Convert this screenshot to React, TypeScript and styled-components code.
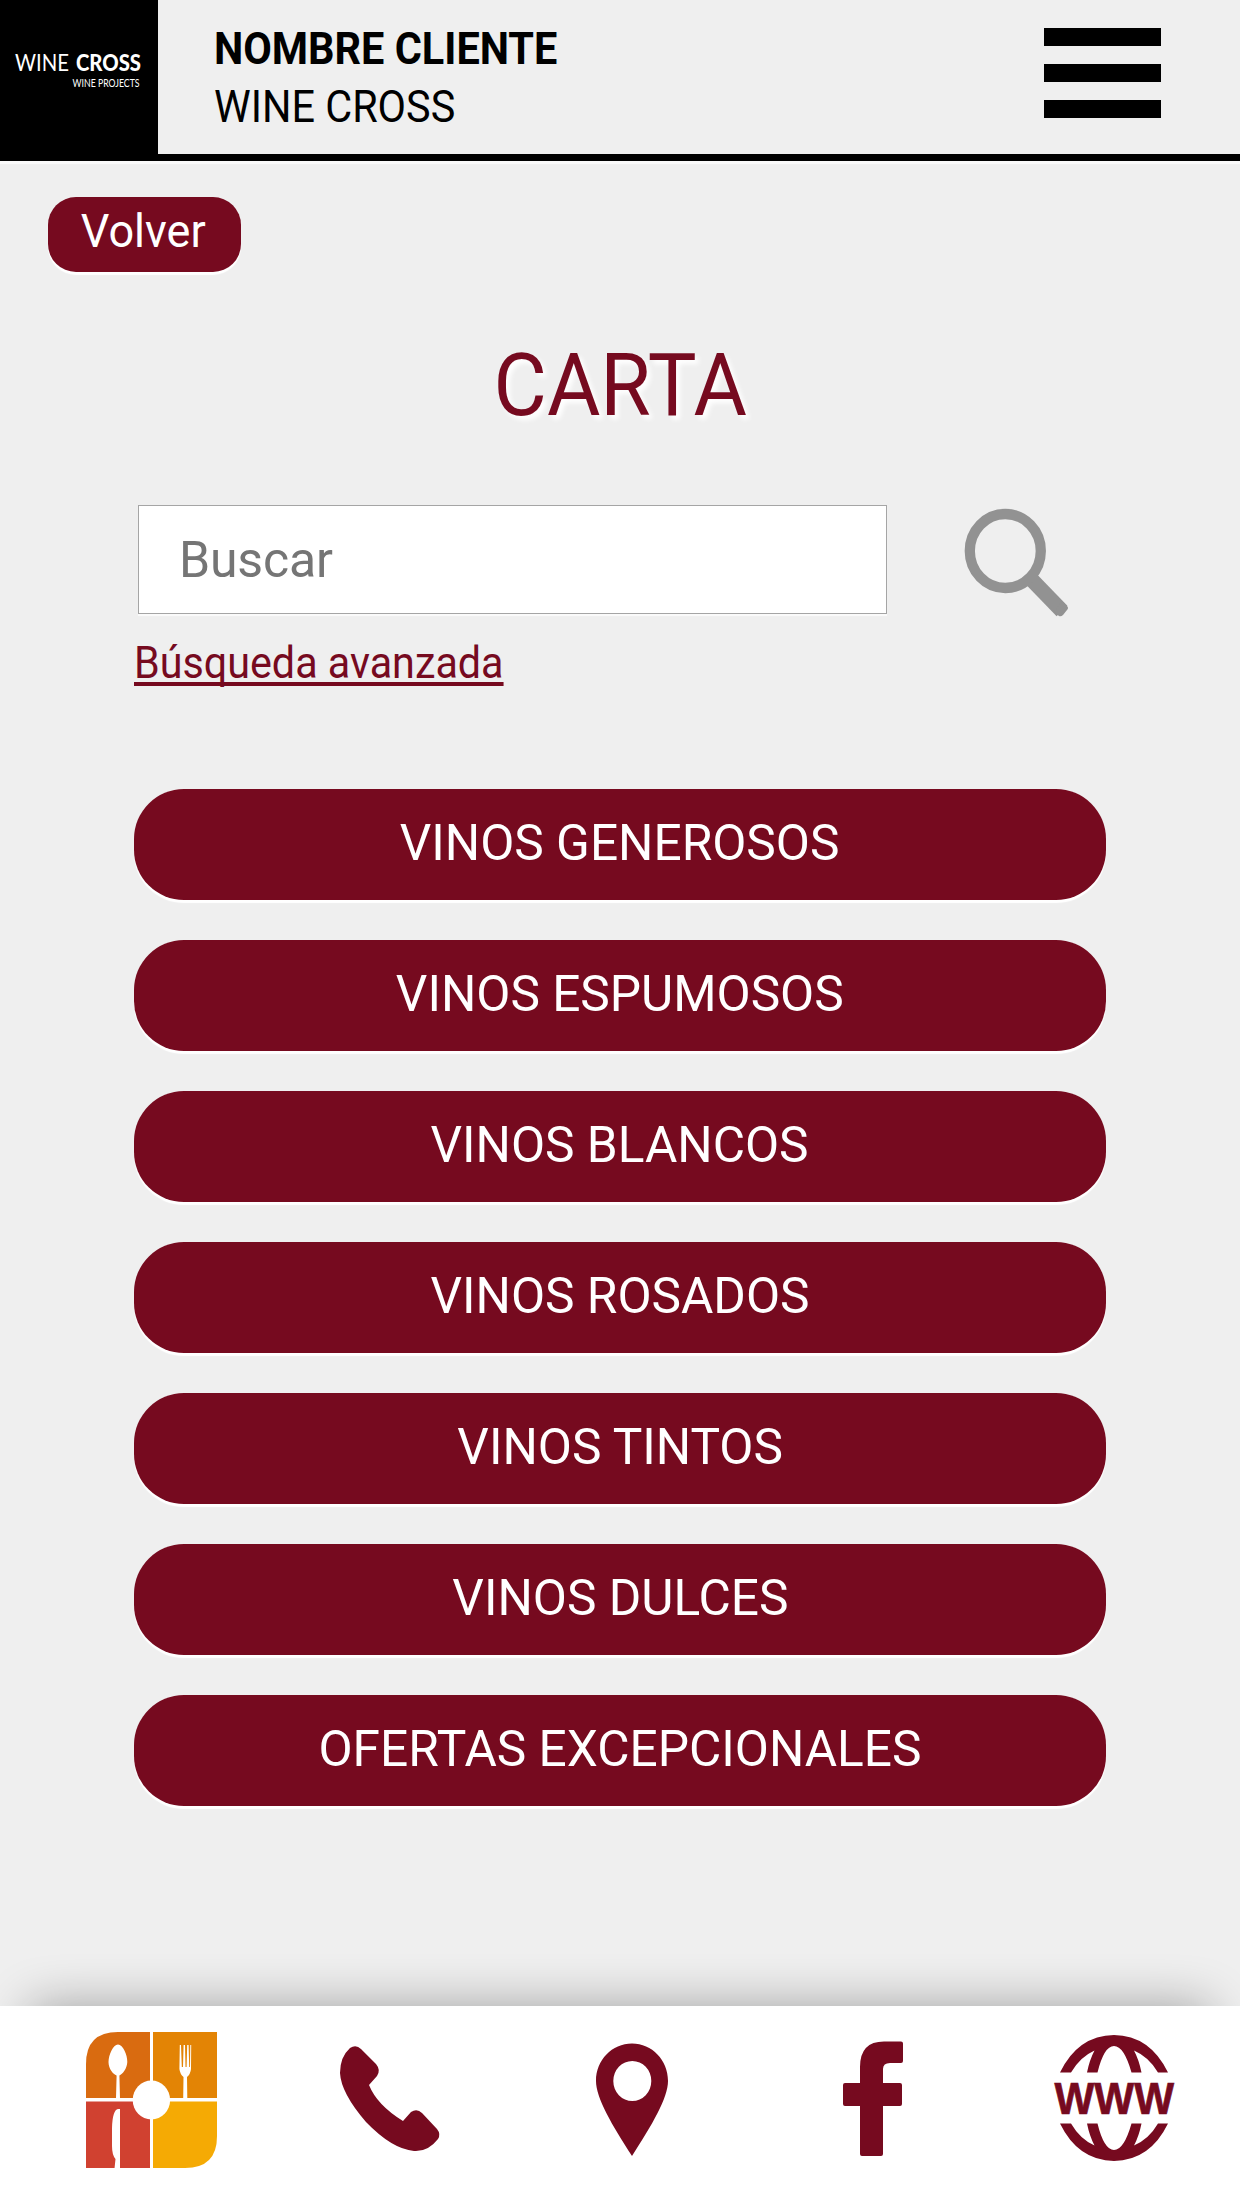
import React from "react";
import styled, { createGlobalStyle } from "styled-components";

const wine = "#760a1f";

const GlobalStyle = createGlobalStyle`
  * { box-sizing: border-box; }
  body { margin: 0; background: #fff; font-family: Roboto, "Liberation Sans", sans-serif; }
`;

const Page = styled.div`
  width: 1240px;
  height: 2208px;
  display: flex;
  flex-direction: column;
  background: #efefef;
  overflow: hidden;
`;

const Header = styled.header`
  height: 161px;
  flex: none;
  display: flex;
  align-items: flex-start;
  border-bottom: 7px solid #000;
  box-shadow: 0 3px 1px #fafafa;
`;

const Logo = styled.div`
  width: 158px;
  height: 154px;
  background: #000;
`;

const Client = styled.div`
  flex: 1;
  padding: 20px 0 0 56px;
  font-size: 44px;
  line-height: 58px;
  color: #000;
  display: flex;
  flex-direction: column;
`;

const Fit = styled.span<{ $scale: number; $origin?: string }>`
  display: inline-block;
  transform: scaleX(${(p) => p.$scale});
  transform-origin: ${(p) => p.$origin ?? "left"} center;
`;

const ClientName = styled.strong`
  font-weight: 700;
`;

const MenuButton = styled.button`
  margin: 28px 79px 0 0;
  padding: 0;
  border: 0;
  background: none;
  display: flex;
  flex-direction: column;
  gap: 18px;
`;

const MenuBar = styled.span`
  width: 117px;
  height: 18px;
  background: #000;
`;

const Main = styled.main`
  flex: 1;
  display: flex;
  flex-direction: column;
  align-items: flex-start;
`;

const BackButton = styled.button`
  margin: 36px 0 0 48px;
  width: 193px;
  height: 75px;
  padding: 0 3px 8px 0;
  border: 0;
  border-radius: 28px;
  background: ${wine};
  color: #fff;
  font: 400 47px Roboto, sans-serif;
  box-shadow: 0 3px 1px #fff;
`;

const Title = styled.h1`
  align-self: center;
  margin: 61px 0 0;
  font-size: 87.5px;
  line-height: 104px;
  font-weight: 400;
  color: ${wine};
  text-shadow: 4px 4px 5px #fff;
`;

const SearchRow = styled.div`
  margin: 68px 0 0 138px;
  display: flex;
  align-items: flex-start;
`;

const SearchInput = styled.input`
  width: 749px;
  height: 109px;
  padding: 0 40px;
  border: 1px solid #a5a5a5;
  background: #fff;
  box-shadow: 0 2px 1px #fafafa;
  font: 400 50px Roboto, sans-serif;
  letter-spacing: -0.2px;
  &::placeholder { color: #757575; opacity: 1; }
`;

const SearchButton = styled.button`
  margin: 3px 0 0 77px;
  padding: 0;
  border: 0;
  background: none;
  svg { display: block; }
`;

const AdvancedLink = styled.a`
  margin: 19px 0 0 134px;
  font-size: 44px;
  line-height: 52px;
  color: ${wine};
  span {
    text-decoration: underline;
    text-decoration-thickness: 3.5px;
    text-underline-offset: 4px;
    text-decoration-skip-ink: none;
  }
`;

const CategoryList = styled.nav`
  margin: 100px 0 0 134px;
  width: 972px;
  display: flex;
  flex-direction: column;
  gap: 40px;
`;

const Category = styled.button`
  height: 111px;
  padding: 0 0 3px;
  border: 0;
  border-radius: 50px;
  background: ${wine};
  color: #fff;
  font: 400 50px Roboto, sans-serif;
  box-shadow: 0 3px 1px #fff;
`;

const Footer = styled.footer`
  flex: none;
  height: 202px;
  padding: 25px 0 0 31px;
  display: grid;
  grid-template-columns: repeat(5, 241px);
  justify-items: center;
  background: #fff;
  box-shadow: 0 -30px 50px -30px rgba(0, 0, 0, 0.33);
`;

const FooterLink = styled.a`
  display: block;
  width: 137px;
  height: 144px;
  svg { display: block; }
`;

const categories = [
  "VINOS GENEROSOS",
  "VINOS ESPUMOSOS",
  "VINOS BLANCOS",
  "VINOS ROSADOS",
  "VINOS TINTOS",
  "VINOS DULCES",
  "OFERTAS EXCEPCIONALES",
];

const LogoMark = () => (
  <svg width="158" height="154" viewBox="0 0 158 154" fill="#fff" fontFamily="Lato, sans-serif">
    <text x="15" y="71" fontSize="22.5" fontWeight="400" textLength="54" lengthAdjust="spacingAndGlyphs">WINE</text>
    <text x="76" y="71" fontSize="22.5" fontWeight="900" textLength="65" lengthAdjust="spacingAndGlyphs">CROSS</text>
    <text x="72.5" y="86.5" fontSize="10.5" fontWeight="400" textLength="67" lengthAdjust="spacingAndGlyphs">WINE PROJECTS</text>
  </svg>
);

const SearchIcon = () => (
  <svg width="105" height="110" viewBox="964 508 105 110">
    <path d="M1032 580 L1062 611" stroke="#929292" strokeWidth="15" strokeLinejoin="round" />
    <path d="M1054 612 l5 4 q2 1 4 -1 l4 -5 q2 -2 0 -4 l-5 -5 z" fill="#929292" />
    <ellipse cx="1005.3" cy="551" rx="35.5" ry="37" fill="none" stroke="#929292" strokeWidth="10.3" />
  </svg>
);

const RestaurantIcon = () => (
  <svg width="137" height="144" viewBox="83 2031 137 144">
    <path d="M86 2098V2064Q86 2032 118 2032H150V2098Z" fill="#d96b10" />
    <path d="M153 2032H217V2098H153Z" fill="#e38405" />
    <path d="M86 2101.5H150V2168H86Z" fill="#d04130" />
    <path d="M153 2101.5H217V2136Q217 2168 185 2168H153Z" fill="#f5aa04" />
    <g fill="#fff">
      <ellipse cx="151.4" cy="2100" rx="18.7" ry="19.5" />
      <path d="M118 2044.5C123 2044.5 127.5 2055 127.3 2062C127 2069 122.500 2074 119.400 2075.500L120 2098.500H116L116.600 2075.500C113 2074 108.600 2069 108.500 2062C108.500 2055 113 2044.500 118 2044.500Z" />
      <path d="M179.800 2045H181L181.800 2067H183L183.600 2045H185L185.500 2067H186.600L187.200 2045H188.600L189.200 2067H190L190.300 2045H191.200L191 2069Q190.500 2074 187 2077L187.300 2098.500H183.200L183.500 2077Q180 2074 179.400 2069Z" />
      <path d="M120 2109V2168.500H114.500L115.500 2159Q112 2155 112 2146V2128Q112.500 2110 118 2109Z" />
    </g>
  </svg>
);

const PhoneIcon = () => (
  <svg width="137" height="144" viewBox="324 2031 137 144">
    <path
      fill={wine}
      d="M350 2048Q356 2044 361 2049L376 2064Q381 2070 377 2076L369 2085Q377 2105 403 2121L411 2112Q417 2108 422 2113L437 2129Q441 2134 438 2139Q428 2152 414 2151Q392 2149 366 2122Q341 2093 340 2073Q340 2057 350 2048Z"
    />
  </svg>
);

const PinIcon = () => (
  <svg width="137" height="144" viewBox="565 2031 137 144">
    <path
      fill={wine}
      fillRule="evenodd"
      d="M632 2043.500C652 2043.500 668 2060 668 2081C668 2098 652 2125 632 2156C612 2125 596 2098 596 2081C596 2060 612 2043.500 632 2043.500ZM632.300 2061A19 20 0 1 0 632.300 2101A19 20 0 1 0 632.300 2061Z"
    />
  </svg>
);

const FacebookIcon = () => (
  <svg width="137" height="144" viewBox="806 2031 137 144">
    <path
      fill={wine}
      d="M860 2083V2067Q860 2041.500 884 2041.500H901Q903 2041.500 903 2043.500V2061Q903 2063 901 2063H890Q883 2063 883 2069V2083H900Q902 2083 902 2085V2104Q902 2106 900 2106H883V2154Q883 2156 881 2156H862Q860 2156 860 2154V2106H845Q843 2106 843 2104V2085Q843 2083 845 2083Z"
    />
  </svg>
);

const WebIcon = () => (
  <svg width="137" height="144" viewBox="1047 2031 137 144">
    <defs>
      <path
        id="globe-cap"
        d="M1060 2072.500Q1078 2035.500 1114 2035Q1150 2035.500 1168 2072.500H1158Q1149 2057 1134 2050.500Q1139 2060 1141.500 2072.500H1131.500Q1124 2046 1114 2046Q1104 2046 1097.500 2072.500H1087Q1089.500 2060 1094.500 2050.500Q1080 2057 1071 2072.500Z"
      />
    </defs>
    <g fill={wine}>
      <use href="#globe-cap" />
      <use href="#globe-cap" transform="translate(0 4196) scale(1 -1)" />
      <text
        x="1054.5"
        y="2113.5"
        fontFamily="Liberation Sans, sans-serif"
        fontSize="44"
        fontWeight="700"
        textLength="119.5"
        lengthAdjust="spacingAndGlyphs"
        stroke={wine}
        strokeWidth="0.7"
      >
        WWW
      </text>
    </g>
  </svg>
);

const footerIcons = [RestaurantIcon, PhoneIcon, PinIcon, FacebookIcon, WebIcon];

export default function App() {
  return (
    <>
      <GlobalStyle />
      <Page>
        <Header>
          <Logo>
            <LogoMark />
          </Logo>
          <Client>
            <ClientName>
              <Fit $scale={0.942}>NOMBRE CLIENTE</Fit>
            </ClientName>
            <Fit $scale={0.94}>WINE CROSS</Fit>
          </Client>
          <MenuButton aria-label="Menu">
            <MenuBar />
            <MenuBar />
            <MenuBar />
          </MenuButton>
        </Header>
        <Main>
          <BackButton>
            <Fit $scale={0.958} $origin="center">Volver</Fit>
          </BackButton>
          <Title>
            <Fit $scale={0.937} $origin="center">CARTA</Fit>
          </Title>
          <SearchRow>
            <SearchInput placeholder="Buscar" />
            <SearchButton aria-label="Buscar">
              <SearchIcon />
            </SearchButton>
          </SearchRow>
          <AdvancedLink>
            <Fit $scale={0.938}>Búsqueda avanzada</Fit>
          </AdvancedLink>
          <CategoryList>
            {categories.map((name) => (
              <Category key={name}>
                <Fit $scale={0.992} $origin="center">{name}</Fit>
              </Category>
            ))}
          </CategoryList>
        </Main>
        <Footer>
          {footerIcons.map((Icon, i) => (
            <FooterLink key={i}>
              <Icon />
            </FooterLink>
          ))}
        </Footer>
      </Page>
    </>
  );
}
